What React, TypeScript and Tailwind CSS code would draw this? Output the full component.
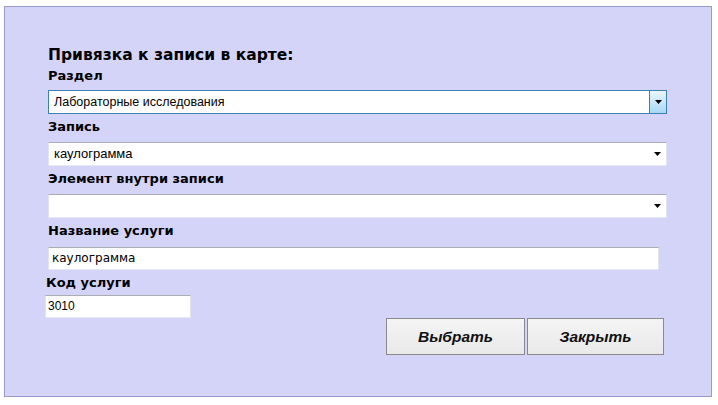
import React from "react";

const labelClass =
  "h-[16px] leading-[16px] text-[13px] font-bold text-black font-['DejaVu_Sans',Verdana,sans-serif] whitespace-nowrap";

const Arrow = () => (
  <svg width="7" height="4" viewBox="0 0 7 4" className="block">
    <path d="M0 0H7L3.5 4Z" fill="#000" />
  </svg>
);

interface SelectBoxProps {
  value: string;
  focused?: boolean;
  className?: string;
  textClassName?: string;
}

const SelectBox = ({
  value,
  focused,
  className = "",
  textClassName = "text-[13px]",
}: SelectBoxProps) => (
  <div
    className={`flex h-[24px] w-[619px] items-stretch bg-white border ${
      focused
        ? "border-[#3c7fb1]"
        : "border-t-[#abadb3] border-l-[#e2e3ea] border-r-[#e2e3ea] border-b-[#e3e9ef]"
    } ${className}`}>
    <div
      className={`flex-1 pl-[5px] leading-[22px] text-black font-['Liberation_Sans',Arial,sans-serif] whitespace-nowrap ${textClassName}`}>
      {value}
    </div>
    {focused ? (
      <div className="flex w-[17px] items-center justify-center border-l border-[#3c7fb1] bg-gradient-to-b from-[#eaf6fd] via-[#c9e7f9] to-[#a7d8f6]">
        <Arrow />
      </div>
    ) : (
      <div className="flex w-[17px] items-center justify-center">
        <Arrow />
      </div>
    )}
  </div>
);

const ActionButton = ({ label }: { label: string }) => (
  <button
    type="button"
    className="h-[37px] border border-[#8a8a8a] bg-gradient-to-b from-[#f4f4f4] to-[#e9e9e9] text-[15.5px] font-bold italic text-[#111] font-['Liberation_Sans',Arial,sans-serif]">
    {label}
  </button>
);

export default function App() {
  return (
    <div className="min-h-[405px] w-[718px] bg-white pl-[4px] pt-[6px]">
      <div className="h-[391px] w-[708px] border border-[#9b9bcb] bg-[#d4d4f9] pl-[43px] pt-[39px]">
        <div className="h-[18px] leading-[18px] text-[15.5px] font-bold text-black font-['DejaVu_Sans',Verdana,sans-serif] whitespace-nowrap">
          Привязка к записи в карте:
        </div>

        <div className={`mt-[4px] ${labelClass}`}>Раздел</div>
        <SelectBox
          className="mt-[6px]"
          textClassName="text-[12.5px]"
          value="Лабораторные исследования"
          focused
        />

        <div className={`mt-[5px] ${labelClass}`}>Запись</div>
        <SelectBox className="mt-[7px]" value="каулограмма" />

        <div className={`mt-[5px] ${labelClass}`}>Элемент внутри записи</div>
        <SelectBox className="mt-[7px]" value="" />

        <div className={`mt-[5px] ${labelClass}`}>Название услуги</div>
        <div className="mt-[8px] h-[23px] w-[611px] border border-t-[#abadb3] border-l-[#e2e3ea] border-r-[#e2e3ea] border-b-[#e3e9ef] bg-white pl-[3px] leading-[21px] text-[12px] text-black font-['DejaVu_Sans',Verdana,sans-serif]">
          каулограмма
        </div>

        <div className={`mt-[5px] -ml-[2px] ${labelClass}`}>Код услуги</div>
        <div className="mt-[4px] -ml-[3px] h-[23px] w-[146px] border border-t-[#abadb3] border-l-[#e2e3ea] border-r-[#e2e3ea] border-b-[#e3e9ef] bg-white pl-[2px] leading-[21px] text-[12px] text-black font-['Liberation_Sans',Arial,sans-serif]">
          3010
        </div>

        <div className="ml-[338px] flex gap-[2px]">
          <div className="w-[139px] flex flex-col">
            <ActionButton label="Выбрать" />
          </div>
          <div className="w-[137px] flex flex-col">
            <ActionButton label="Закрыть" />
          </div>
        </div>
      </div>
    </div>
  );
}
